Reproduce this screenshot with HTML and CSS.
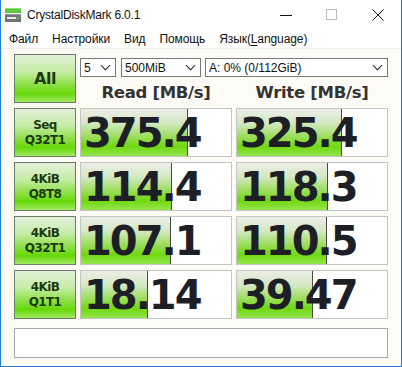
FILE: index.html
```html
<!DOCTYPE html>
<html lang="ru">
<head>
<meta charset="utf-8">
<title>CrystalDiskMark 6.0.1</title>
<link rel="stylesheet" href="styles.css">
</head>
<body>
<div class="window">
  <div class="titlebar">
    <svg class="appicon" width="16" height="16" viewBox="0 0 16 16">
      <rect x="0" y="1" width="16" height="5" fill="#5cc83a"/>
      <rect x="0" y="1" width="16" height="1" fill="#8ee070"/>
      <rect x="0" y="7" width="16" height="8" fill="#6d7378"/>
      <rect x="0" y="7" width="16" height="1" fill="#9aa0a4"/>
      <rect x="2" y="10" width="9" height="2" fill="#e8ece8"/>
      <rect x="12" y="10" width="2" height="2" fill="#5cc83a"/>
    </svg>
    <span class="title">CrystalDiskMark 6.0.1</span>
    <div class="controls">
      <span class="ctl"><svg width="12" height="12" viewBox="0 0 12 12"><line x1="0" y1="6.5" x2="12" y2="6.5" stroke="#111" stroke-width="1"/></svg></span>
      <span class="ctl"><svg width="12" height="12" viewBox="0 0 12 12"><rect x="0.5" y="0.5" width="10" height="10" fill="none" stroke="#bbb" stroke-width="1"/></svg></span>
      <span class="ctl"><svg width="12" height="12" viewBox="0 0 12 12"><path d="M0.5 0.5 L11.5 11.5 M11.5 0.5 L0.5 11.5" stroke="#111" stroke-width="1"/></svg></span>
    </div>
  </div>
  <div class="menubar">
    <span class="mi">Файл</span>
    <span class="mi">Настройки</span>
    <span class="mi">Вид</span>
    <span class="mi">Помощь</span>
    <span class="mi">Язык(<u>L</u>anguage)</span>
  </div>
  <div class="client">
    <div class="grid">
      <div class="btn btn-all">All</div>
      <div class="topright">
        <div class="selects">
          <div class="select s-count"><span>5</span><i class="chev"></i></div>
          <div class="select s-size"><span>500MiB</span><i class="chev"></i></div>
          <div class="select s-drive"><span>A: 0% (0/112GiB)</span><i class="chev"></i></div>
        </div>
        <div class="heads">
          <div class="head">Read [MB/s]</div>
          <div class="head">Write [MB/s]</div>
        </div>
      </div>

      <div class="btn">Seq<br>Q32T1</div>
      <div class="box"><div class="fill" style="width:107px"></div><span class="num">375.4</span></div>
      <div class="box"><div class="fill" style="width:105px"></div><span class="num">325.4</span></div>

      <div class="btn">4KiB<br>Q8T8</div>
      <div class="box"><div class="fill" style="width:91px"></div><span class="num">114.4</span></div>
      <div class="box"><div class="fill" style="width:91px"></div><span class="num">118.3</span></div>

      <div class="btn">4KiB<br>Q32T1</div>
      <div class="box"><div class="fill" style="width:90px"></div><span class="num">107.1</span></div>
      <div class="box"><div class="fill" style="width:90px"></div><span class="num">110.5</span></div>

      <div class="btn">4KiB<br>Q1T1</div>
      <div class="box"><div class="fill" style="width:67px"></div><span class="num">18.14</span></div>
      <div class="box"><div class="fill" style="width:76px"></div><span class="num">39.47</span></div>
    </div>
    <div class="comment"></div>
  </div>
</div>
</body>
</html>
```

FILE: styles.css
```css
html, body {
  margin: 0;
  padding: 0;
  background: #ffffff;
}
.window {
  width: 400px;
  height: 366px;
  border-left: 1px solid #1f7fd6;
  border-right: 1px solid #1f7fd6;
  border-bottom: 1px solid #1f7fd6;
  background: #fdfbf6;
  display: flex;
  flex-direction: column;
  font-family: "Liberation Sans", Arial, sans-serif;
}
.titlebar {
  height: 30px;
  background: #ffffff;
  display: flex;
  align-items: center;
  padding-left: 4px;
  box-sizing: border-box;
}
.appicon {
  display: block;
}
.title {
  margin-left: 6px;
  font-size: 12px;
  color: #111;
  letter-spacing: -0.2px;
}
.controls {
  margin-left: auto;
  display: flex;
  height: 30px;
}
.ctl {
  width: 46px;
  display: flex;
  align-items: center;
  justify-content: center;
}
.menubar {
  height: 19px;
  background: #ffffff;
  display: flex;
  align-items: center;
  padding-left: 1px;
  border-bottom: 1px solid #f2efe9;
  box-sizing: border-box;
  font-size: 12px;
  color: #111;
}
.mi {
  padding: 0 7px;
  letter-spacing: -0.1px;
}
.mi u {
  text-decoration-thickness: 1px;
  text-underline-offset: 2px;
}
.client {
  padding: 5px 13px 8px 13px;
  display: flex;
  flex-direction: column;
  gap: 9px;
}
.grid {
  display: grid;
  grid-template-columns: 62px 152px 152px;
  grid-template-rows: repeat(5, 49px);
  column-gap: 4px;
  row-gap: 5px;
}
.btn {
  box-sizing: border-box;
  border: 1px solid #6e7a6a;
  background: linear-gradient(to bottom, #e2f0da 0%, #c6eca6 35%, #90e04a 62%, #66d808 82%, #a0ea60 100%);
  display: flex;
  align-items: center;
  justify-content: center;
  text-align: center;
  font-family: "DejaVu Sans", Verdana, sans-serif;
  font-weight: bold;
  font-size: 12px;
  line-height: 15px;
  letter-spacing: -0.6px;
  color: #1d3a12;
}
.btn-all {
  font-size: 16px;
  letter-spacing: -0.5px;
}
.topright {
  grid-column: 2 / span 2;
  display: flex;
  flex-direction: column;
}
.selects {
  display: flex;
  margin-top: 4px;
  height: 19px;
}
.select {
  box-sizing: border-box;
  height: 19px;
  border: 1px solid #7a7a7a;
  background: #ffffff;
  display: flex;
  align-items: center;
  padding-left: 3px;
  font-size: 12px;
  color: #111;
}
.s-count { width: 36px; }
.s-size { width: 80px; margin-left: 5px; }
.s-drive { width: 183px; margin-left: 4px; }
.chev {
  margin-left: auto;
  margin-right: 6px;
  width: 6px;
  height: 6px;
  border-right: 1.5px solid #222;
  border-bottom: 1.5px solid #222;
  transform: rotate(45deg);
  margin-top: -4px;
}
.heads {
  display: flex;
  gap: 4px;
  margin-top: 6px;
}
.head {
  width: 152px;
  text-align: center;
  font-family: "DejaVu Sans", Verdana, sans-serif;
  font-weight: bold;
  font-size: 16.5px;
  letter-spacing: -0.3px;
  color: #333333;
  line-height: 20px;
}
.box {
  position: relative;
  box-sizing: border-box;
  border: 1px solid #c4c4c4;
  background: #ffffff;
  display: flex;
  align-items: center;
  overflow: hidden;
}
.fill {
  position: absolute;
  left: 0;
  top: 0;
  bottom: 0;
  background: linear-gradient(to bottom, #eceee8 0%, #d4e8c4 30%, #a2de66 56%, #70d810 80%, #94e64c 100%);
  border-right: 1px solid #4a4a4a;
  box-sizing: border-box;
}
.num {
  position: relative;
  margin-left: 3px;
  font-family: "DejaVu Sans", Verdana, sans-serif;
  font-weight: bold;
  font-size: 40px;
  line-height: 40px;
  letter-spacing: -2px;
  color: #1e1e26;
}
.comment {
  height: 30px;
  box-sizing: border-box;
  border: 1px solid #a8a8a8;
  background: #ffffff;
  width: 374px;
}
```
